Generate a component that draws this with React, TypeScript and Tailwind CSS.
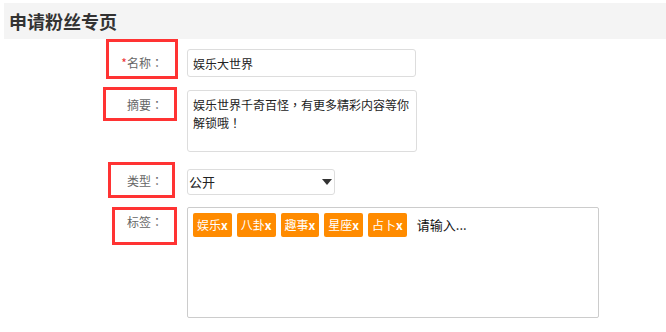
const font = { fontFamily: '"Noto Sans CJK SC", "Noto Sans", sans-serif' };
// centred full-width punctuation, as in the reference
const punct = { fontFamily: '"Noto Sans CJK TC", "Noto Sans CJK SC", sans-serif' };

const tags = ["娱乐", "八卦", "趣事", "星座", "占卜"];

function Mark({ className }: { className: string }) {
  // red annotation frame drawn over a label
  return <div className={`absolute border-[3px] border-[#f33] pointer-events-none ${className}`} />;
}

function Label({ children, className = "" }: { children: React.ReactNode; className?: string }) {
  return (
    <div className={`w-[163px] shrink-0 text-right text-[12px] leading-[18px] text-[#666] ${className}`}>
      {children}
      <span style={punct}>：</span>
    </div>
  );
}

export default function App() {
  return (
    <div className="w-[666px] h-[332px] bg-white overflow-hidden text-[#222]" style={font}>
      {/* Header */}
      <div className="ml-[4px] mt-[3px] h-[36px] bg-[#f4f4f4] flex items-center pl-[5px]">
        <h1 className="text-[18px] font-bold text-[#333] leading-none">申请粉丝专页</h1>
      </div>

      {/* Name */}
      <div className="relative flex items-center mt-[10px]">
        <Label>
          <span className="text-[#e33]">*</span>名称
        </Label>
        <input
          readOnly
          defaultValue="娱乐大世界"
          className="ml-[24px] w-[229px] h-[28px] border border-[#ddd] rounded-[3px] px-[5px] text-[12px] text-[#222] outline-none"
          style={font}
        />
        <Mark className="left-[106px] -top-[10px] w-[72px] h-[40px]" />
      </div>

      {/* Summary */}
      <div className="relative flex items-start mt-[13px]">
        <Label className="pt-[6px]">摘要</Label>
        <textarea
          readOnly
          defaultValue="娱乐世界千奇百怪，有更多精彩内容等你解锁哦！"
          className="ml-[24px] w-[230px] h-[62px] border border-[#ddd] rounded-[3px] px-[5px] py-[5px] text-[12px] leading-[18px] text-[#222] resize-none outline-none"
          style={punct}
        />
        <Mark className="left-[103px] -top-[3px] w-[74px] h-[34px]" />
      </div>

      {/* Type */}
      <div className="relative flex items-center mt-[16px]">
        <Label>类型</Label>
        <div className="ml-[24px] relative w-[148px] h-[26px]">
          <select
            defaultValue="公开"
            className="appearance-none w-full h-full border border-[#ddd] rounded-[3px] pl-[1px] text-[13px] text-[#222] bg-white outline-none"
            style={font}
          >
            <option>公开</option>
            <option>私密</option>
          </select>
          <svg className="absolute right-[3px] top-[11px] pointer-events-none" width="10" height="6" viewBox="0 0 10 6">
            <path d="M0 0 H10 L5 6 Z" fill="#333" />
          </svg>
        </div>
        <Mark className="left-[108px] -top-[6px] w-[67px] h-[36px]" />
      </div>

      {/* Tags */}
      <div className="relative flex items-start mt-[13px]">
        <Label className="pt-[6px]">标签</Label>
        <div className="ml-[24px] w-[412px] h-[111px] border border-[#ccc] rounded-[2px] p-[5px] flex flex-wrap content-start items-center gap-[5px]">
          {tags.map((t) => (
            <span
              key={t}
              className="h-[24px] px-[4px] flex items-center rounded-[2px] bg-[#ff8b00] text-white text-[12px]"
            >
              {t}
              <b className="font-bold">x</b>
            </span>
          ))}
          <span className="ml-[5px] text-[13px] text-[#111]">请输入...</span>
        </div>
        <Mark className="left-[112px] top-0 w-[65px] h-[38px]" />
      </div>
    </div>
  );
}
